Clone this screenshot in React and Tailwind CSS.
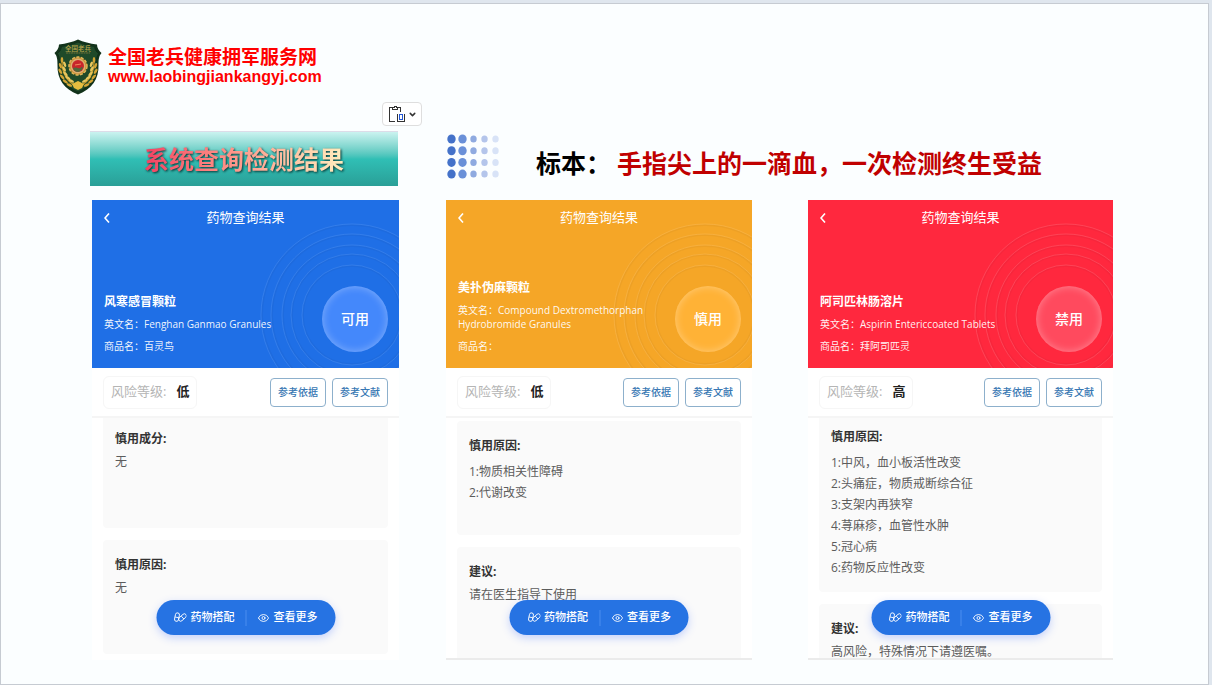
import { ChevronDown, Eye } from 'lucide-react';
import clsx from 'clsx';

const reports = [
  {
    name: '风寒感冒颗粒',
    english: 'Fenghan Ganmao Granules',
    brand: '百灵鸟',
    status: '可用',
    risk: '低',
    header: 'bg-[#1f6fe6]',
    badge: 'bg-[#4488fb]',
    ring: 'text-[#4a8df2]',
    scroll: '-mt-1',
    edge: 'border-white',
    sections: [
      { title: '慎用成分:', lines: ['无'] },
      { title: '慎用原因:', lines: ['无'] },
    ],
  },
  {
    name: '美扑伪麻颗粒',
    english: 'Compound Dextromethorphan Hydrobromide Granules',
    brand: '',
    status: '慎用',
    risk: '低',
    header: 'bg-[#f5a627]',
    badge: 'bg-[#ffb236]',
    ring: 'text-[#fcbc57]',
    scroll: 'mt-[3px]',
    edge: 'border-[#ebebeb]',
    sections: [
      { title: '慎用原因:', lines: ['1:物质相关性障碍', '2:代谢改变'] },
      { title: '建议:', lines: ['请在医生指导下使用'] },
    ],
  },
  {
    name: '阿司匹林肠溶片',
    english: 'Aspirin Entericcoated Tablets',
    brand: '拜阿司匹灵',
    status: '禁用',
    risk: '高',
    header: 'bg-[#ff283e]',
    badge: 'bg-[#ff4a5e]',
    ring: 'text-[#ff6272]',
    scroll: '-mt-[6px]',
    edge: 'border-[#ebebeb]',
    sections: [
      {
        title: '慎用原因:',
        lines: [
          '1:中风，血小板活性改变',
          '2:头痛症，物质戒断综合征',
          '3:支架内再狭窄',
          '4:荨麻疹，血管性水肿',
          '5:冠心病',
          '6:药物反应性改变',
        ],
      },
      { title: '建议:', lines: ['高风险，特殊情况下请遵医嘱。'] },
    ],
  },
];

const dotColumns = [
  { r: 5, fill: '#4472c9' },
  { r: 5, fill: '#6a90d8' },
  { r: 4, fill: '#8faae0' },
  { r: 4, fill: '#b4c5eb' },
  { r: 4, fill: '#d8e3f7' },
];

function Shield() {
  const leaves = [
    [9, 28, -20],
    [9, 33, -30],
    [11, 38, -42],
    [14, 42, -55],
    [18, 45, -65],
  ];
  return (
    <svg viewBox="0 0 48 56" className="h-14 w-12 shrink-0" aria-hidden="true">
      <path d="M24 0.5 C19 3 12 4.5 5 5.5 C5 9 3 12 0.5 14 C3 17 3.5 20 3.5 26 C3 40 10 50 24 55.5 C38 50 45 40 44.5 26 C44.5 20 45 17 47.5 14 C45 12 43 9 43 5.5 C36 4.5 29 3 24 0.5 Z" fill="#12331b" />
      <path d="M24 3 C19 5.5 13 6.5 7.5 7.5 C7 11 5.5 13 3.5 14.5 C5.5 18 6 21 6 26 C5.5 39 12 48 24 53 C36 48 42.5 39 42 26 C42 21 42.5 18 44.5 14.5 C42.5 13 41 11 40.5 7.5 C35 6.5 29 5.5 24 3 Z" fill="#1f4a29" stroke="#0f2d18" strokeWidth="0.8" />
      <text x="24" y="11.5" textAnchor="middle" fontSize="6.5" fontWeight="500" fill="#b5a24a" fontFamily="Noto Sans CJK SC, sans-serif">全国老兵</text>
      <path d="M12 14 H36" stroke="#6f7038" strokeWidth="1" strokeDasharray="2 0.5" />
      {[false, true].map((mirror) => (
        <g key={String(mirror)} transform={mirror ? 'translate(48 0) scale(-1 1)' : undefined}>
          <path d="M8 22 C8 34 12 43 24 48" fill="none" stroke="#c79626" strokeWidth="1.2" />
          {leaves.map(([x, y, angle]) => (
            <g key={y} transform={`translate(${x} ${y}) rotate(${angle})`}>
              <ellipse cx="-2" cy="-2" rx="1.3" ry="3" fill="#d3a535" />
              <ellipse cx="2.5" cy="-2" rx="1.3" ry="3" fill="#e8c65c" />
            </g>
          ))}
          <ellipse cx="8" cy="21" rx="1.3" ry="3" fill="#d3a535" />
        </g>
      ))}
      <path d="M18 45 L24 42 L30 45 L28 49 L24 51 L20 49 Z" fill="#e6bd3f" />
      <circle cx="24" cy="27" r="9" fill="#c98f35" stroke="#e3b85a" strokeWidth="1.5" strokeDasharray="3 1.5" />
      <circle cx="24" cy="27" r="7.5" fill="#dcb070" />
      <circle cx="24" cy="27" r="6" fill="#c8262b" />
      <path d="M19 29 C22 27 26 31 29 28 C28 32 25 33 24 33 C21 33 19.5 31 19 29 Z" fill="#4f6a3c" />
      <path d="M21 26 L27 25" stroke="#f08a5c" strokeWidth="1" />
    </svg>
  );
}

function PasteIcon() {
  return (
    <svg viewBox="0 0 17 17" className="h-[17px] w-[17px]" fill="none" shapeRendering="crispEdges" aria-hidden="true">
      <path d="M4 1.5 H1.5 V15.5 H7 M10 1.5 H12.5 V6" stroke="#333" />
      <path d="M4.5 3.5 V1.5 H6 V0.5 H8 V1.5 H9.5 V3.5 Z" stroke="#333" />
      <path d="M9.5 8 V15.5 H16.5 V8" stroke="#333" />
      <rect x="11.5" y="8.5" width="3" height="5" stroke="#2457d6" />
    </svg>
  );
}

function Capsules() {
  return (
    <svg viewBox="0 0 13 11" className="h-[11px] w-[13px]" fill="none" stroke="currentColor" strokeWidth="0.9" aria-hidden="true">
      <rect x="1.5" y="0.8" width="4" height="8.6" rx="2" transform="rotate(12 3.5 5)" />
      <path d="M1.6 5 L5.3 5.8" />
      <rect x="7" y="1" width="4" height="9" rx="2" transform="rotate(48 9 5.5)" />
      <path d="M7.8 4.2 L10.4 7" />
    </svg>
  );
}

function DotGrid() {
  return (
    <svg viewBox="0 0 53 45" className="h-[45px] w-[53px] shrink-0" aria-hidden="true">
      {[0, 1, 2, 3].map((row) =>
        dotColumns.map((dot, col) => (
          <ellipse key={`${row}-${col}`} cx={4.5 + col * 11} cy={5 + row * 11.7} rx={dot.r - 0.8} ry={dot.r - 0.5} fill={dot.fill} />
        ))
      )}
    </svg>
  );
}

function Rings({ className }) {
  return (
    <svg viewBox="0 0 140 168" className={clsx('absolute right-0 bottom-0 h-[168px] w-[140px]', className)} fill="none" stroke="currentColor" aria-hidden="true">
      {[91, 81, 70, 61, 50].map((r) => (
        <g key={r}>
          <circle cx="93" cy="115" r={r - 1} stroke="#000" strokeOpacity="0.03" strokeWidth="2" />
          <circle cx="93" cy="115" r={r} strokeOpacity="0.5" />
        </g>
      ))}
    </svg>
  );
}

function ReportCard({ report }) {
  return (
    <article className={clsx('relative flex h-[460px] min-w-0 flex-col overflow-hidden border-b-2 bg-white', report.edge)}>
      <header className={clsx('relative flex h-[168px] shrink-0 flex-col px-3 pb-[15px] text-white', report.header)}>
        <Rings className={report.ring} />
        <div className="relative flex h-9 items-center justify-center">
          <button type="button" className="absolute left-0 flex h-6 w-3 items-center" aria-label="返回">
            <svg viewBox="0 0 6 10" className="h-[10px] w-[6px]" fill="none" stroke="currentColor" strokeWidth="1.6" aria-hidden="true">
              <path d="M5 0.5 L1 5 L5 9.5" />
            </svg>
          </button>
          <h2 className="text-[13px]">药物查询结果</h2>
        </div>
        <div className="relative mt-auto flex w-[200px] flex-col gap-2 text-[10px] leading-[14px] text-white/95">
          <h3 className="text-xs leading-[14px] font-bold text-white">{report.name}</h3>
          <p>英文名：{report.english}</p>
          <p>商品名：{report.brand}</p>
        </div>
        <span className={clsx('absolute right-[11px] bottom-4 flex h-[66px] w-[66px] items-center justify-center rounded-full text-sm font-medium shadow-[inset_0_0_8px_rgba(255,255,255,0.35)]', report.badge)}>
          {report.status}
        </span>
      </header>

      <div className="flex h-[50px] shrink-0 items-center gap-[6px] border-b-2 border-[#f5f5f5] px-[11px]">
        <p className="mr-auto flex h-[33px] items-center gap-[10px] rounded-md border border-[#f6f6f6] px-[7px] text-[13px] text-[#b5b5b5]">
          风险等级:
          <strong className="font-bold text-[#222]">{report.risk}</strong>
        </p>
        {['参考依据', '参考文献'].map((label) => (
          <button key={label} type="button" className="h-[29px] w-14 rounded-sm border border-[#8db0cc] text-[10px] font-medium text-[#3877b3]">
            {label}
          </button>
        ))}
      </div>

      <div className="min-h-0 flex-1 overflow-hidden px-[11px]">
        <div className={clsx('flex flex-col gap-3', report.scroll)}>
          {report.sections.map((section) => (
            <section key={section.title} className="min-h-[114px] rounded-sm bg-[#fafafa] px-3 pt-4 pb-[14px]">
              <h4 className="text-xs leading-[18px] font-bold text-[#333]">{section.title}</h4>
              <div className={clsx('text-xs leading-[21px] text-[#5c5c5c]', section.lines.length > 1 ? 'mt-[6px]' : 'mt-[3px]')}>
                {section.lines.map((line) => (
                  <p key={line}>{line}</p>
                ))}
              </div>
            </section>
          ))}
        </div>
      </div>

      <div className="absolute bottom-[23px] left-1/2 flex h-[35px] w-[179px] -translate-x-1/2 items-center justify-center rounded-full bg-[#2673e3] text-[11px] font-medium text-white shadow-[0_3px_8px_rgba(38,90,255,0.25)]">
        <button type="button" className="flex items-center gap-1">
          <Capsules />
          药物搭配
        </button>
        <span className="mx-[11px] h-4 w-px bg-[#4b8df0]" />
        <button type="button" className="flex items-center gap-1">
          <Eye className="h-3 w-3" strokeWidth={1.8} />
          查看更多
        </button>
      </div>
    </article>
  );
}

export default function App() {
  return (
    <div className="flex min-h-screen flex-col bg-[#dfe6ee] pt-[3px] pr-[3px] pb-px font-['Open_Sans','Noto_Sans_CJK_SC',sans-serif]">
      <main className="flex-1 border border-[#c6cbd2] bg-[#fbfeff] pb-6">
        <div className="flex items-center gap-[6px] pt-[35px] pl-[53px]">
          <Shield />
          <div className="font-bold text-[#ff0000]">
            <h1 className="text-[19px] leading-5">全国老兵健康拥军服务网</h1>
            <a href="http://www.laobingjiankangyj.com" className="block font-['Liberation_Sans',sans-serif] text-base leading-5">
              www.laobingjiankangyj.com
            </a>
          </div>
        </div>

        <button type="button" aria-label="粘贴选项" className="mt-[7px] ml-[381px] flex h-6 w-10 items-center justify-center gap-[3px] rounded border border-[#dedede] bg-white">
          <PasteIcon />
          <ChevronDown className="h-[9px] w-[9px] text-[#333]" strokeWidth={4} />
        </button>

        <div className="mt-[5px] ml-[89px] flex items-center">
          <div className="flex h-[55px] w-[308px] shrink-0 items-center justify-center border-t border-[#dcdce8] bg-linear-to-b from-[#caf3f0] via-[#30bfb5] to-[#2a9f97]">
            <h2 className="bg-linear-to-r from-[#f23e62] to-[#ffedbe] bg-clip-text text-[25px] leading-9 font-bold text-transparent drop-shadow-[1px_1px_1px_rgba(0,40,40,0.9)]">
              系统查询检测结果
            </h2>
          </div>
          <div className="mb-1 ml-[49px]">
            <DotGrid />
          </div>
          <p className="mt-2 ml-9 flex gap-[6px] text-[25px] leading-9 font-bold whitespace-nowrap">
            <span className="text-black">标本：</span>
            <span className="text-[#c00000]">手指尖上的一滴血，一次检测终生受益</span>
          </p>
        </div>

        <div className="mt-[14px] grid grid-cols-[307fr_47px_306fr_56px_305fr] pr-[95px] pl-[91px]">
          <ReportCard report={reports[0]} />
          <span />
          <ReportCard report={reports[1]} />
          <span />
          <ReportCard report={reports[2]} />
        </div>
      </main>
    </div>
  );
}
